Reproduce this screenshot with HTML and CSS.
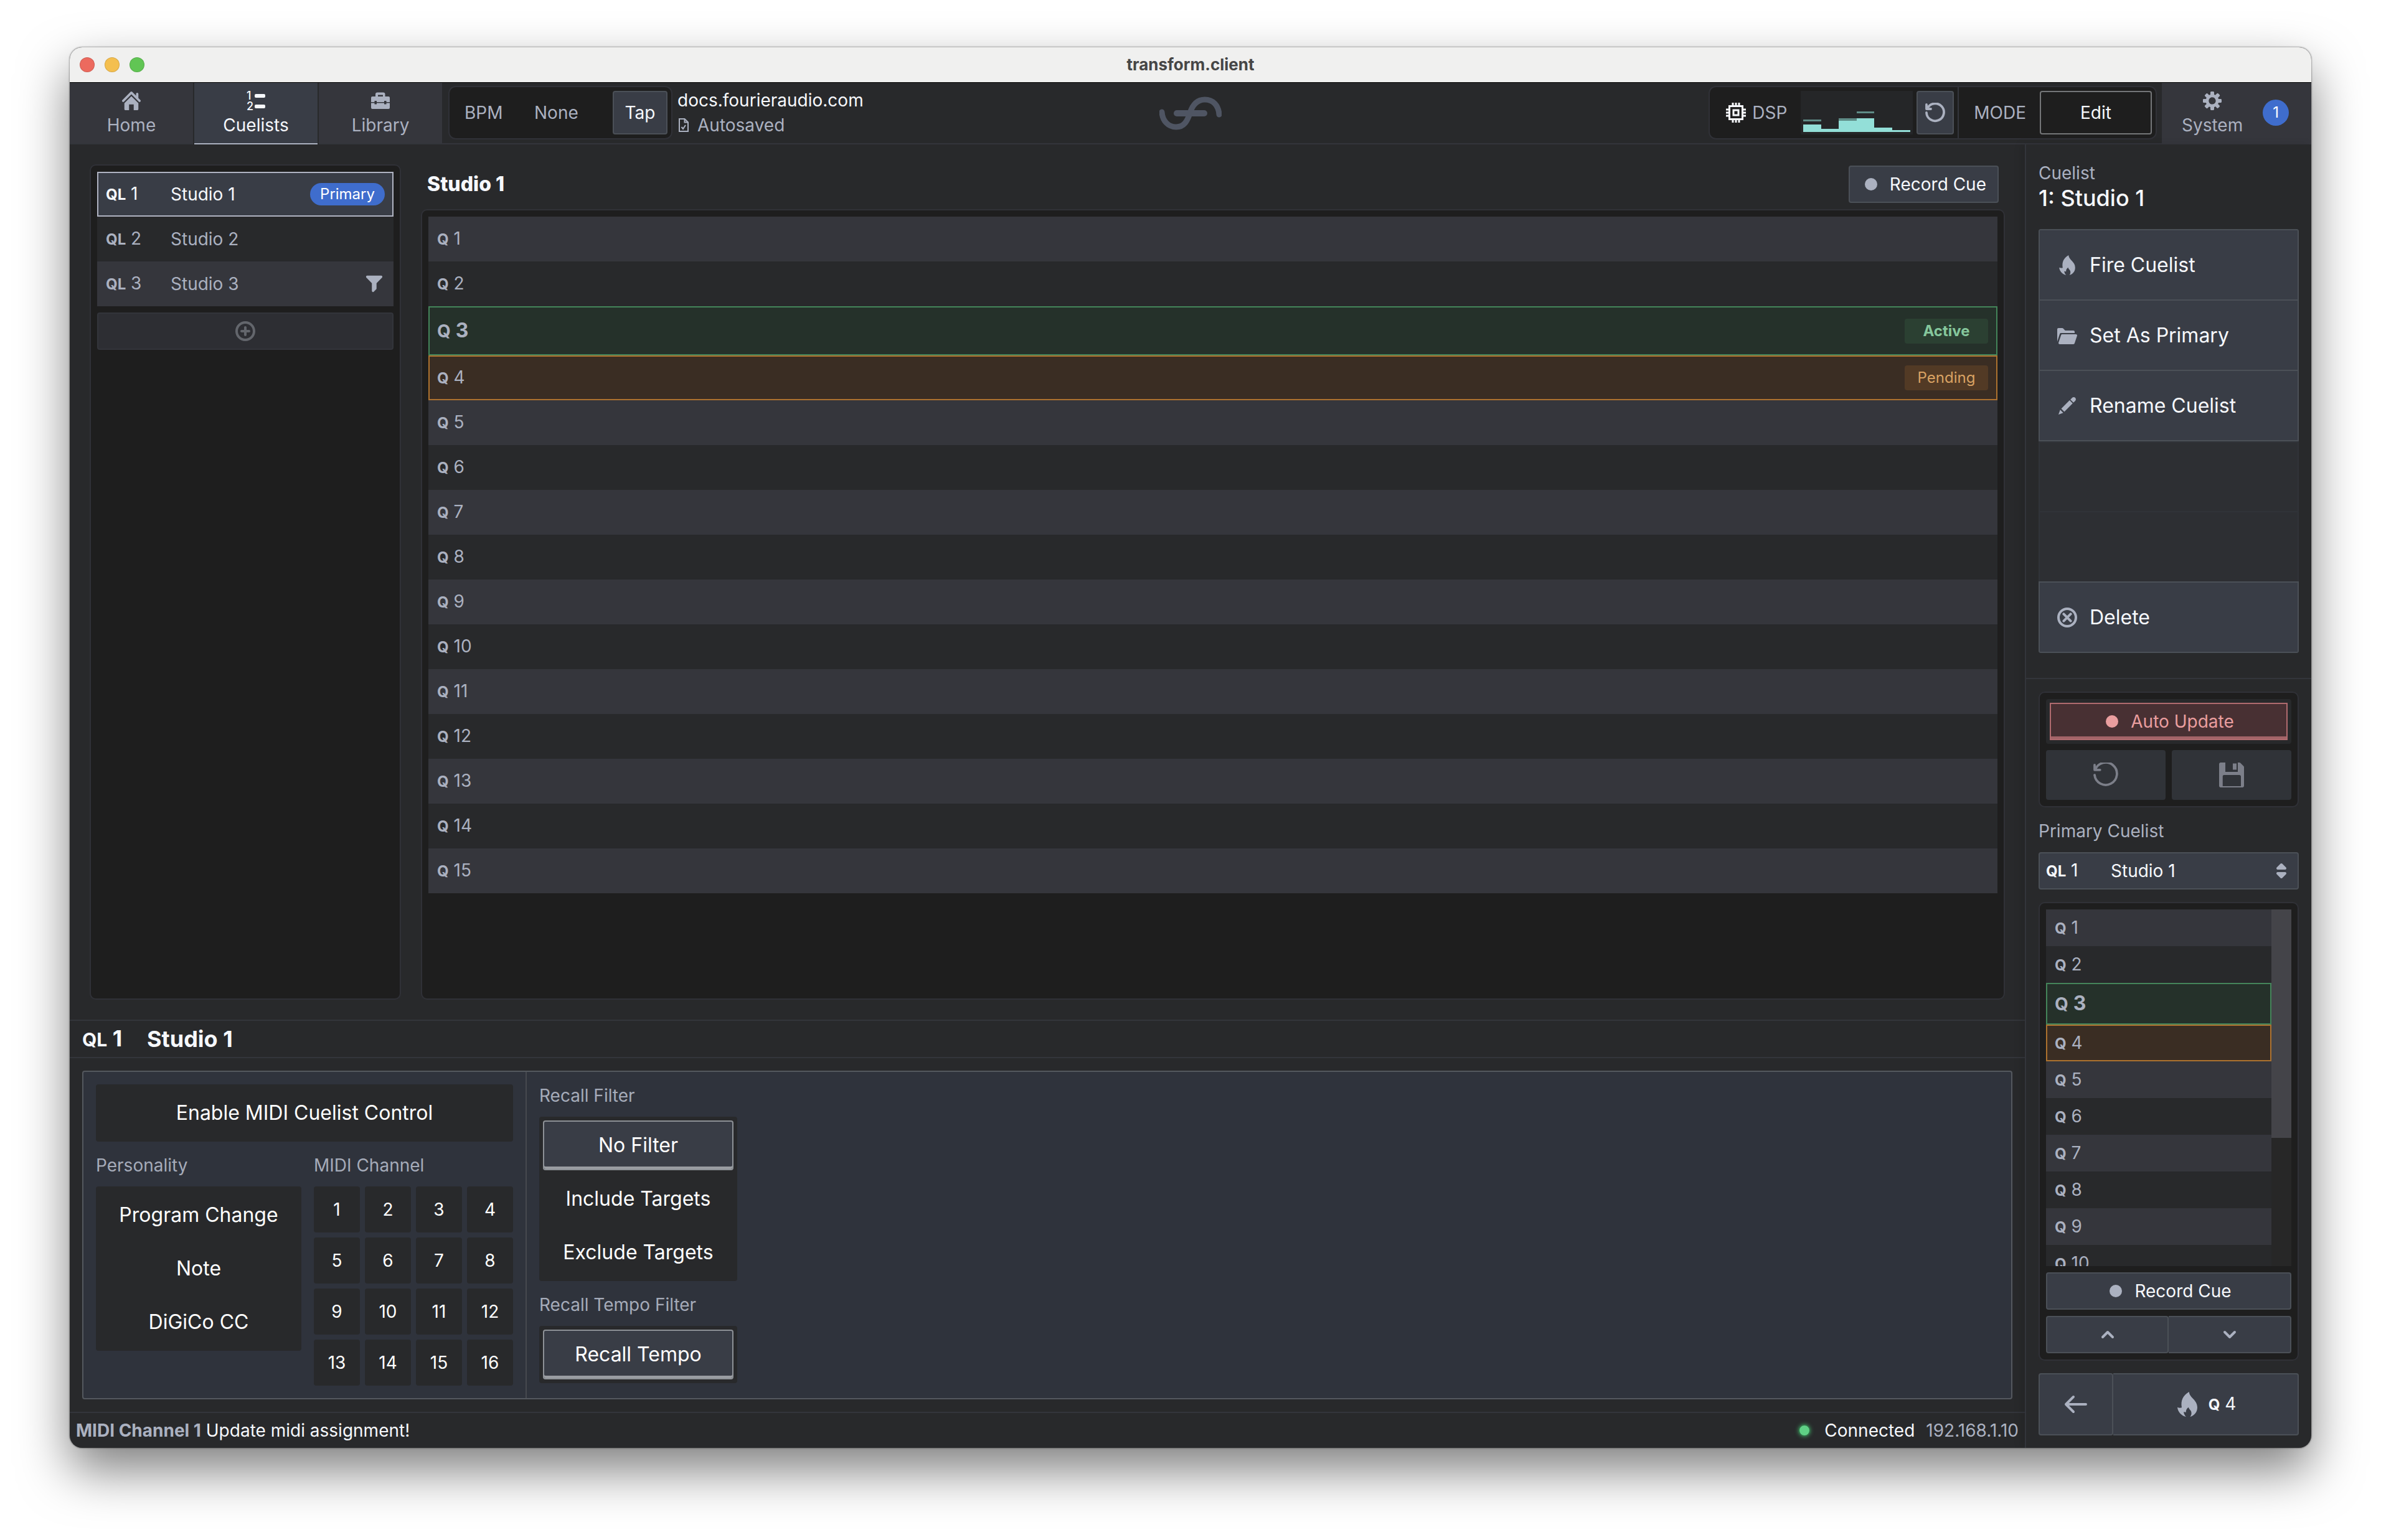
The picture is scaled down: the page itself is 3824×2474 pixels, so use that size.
FILE: index.html
```html
<!DOCTYPE html>
<html lang="en">
<head>
<meta charset="utf-8">
<meta name="viewport" content="width=device-width, initial-scale=1">
<title>transform.client</title>
<link rel="stylesheet" href="styles.css">
</head>
<body>
<svg class="sprite" aria-hidden="true">
  <symbol id="i-home" viewBox="0 0 16 16"><path d="M2 10v5c0 .55.45 1 1 1h3v-5h4v5h3c.55 0 1-.45 1-1v-5L8 4l-6 6zm13.71-2.71L14 5.59V2c0-.55-.45-1-1-1s-1 .45-1 1v1.59L8.710.29C8.53.11 8.28 0 8 0s-.53.11-.71.29l-7 7a1.003 1.003 0 001.42 1.42L8 2.41l6.290 6.290c.18.19.43.3.71.3a1.003 1.003 0 00.71-1.710z"/></symbol>
  <symbol id="i-toolbox" viewBox="0 0 30 30"><path fill-rule="evenodd" d="M7 8V4.500A3 3 0 0110 1.500h9.500a3 3 0 013 3V8H28a2 2 0 012 2v7H24.500v-2h-3.500v2H9v-2H5.500v2H0v-7a2 2 0 012-2zM11 5.500V8h8V5.500zM0 18.500h5.500v2H9v-2h12v2h3.500v-2H30V26a2 2 0 01-2 2H2a2 2 0 01-2-2z"/></symbol>
  <symbol id="i-doc" viewBox="0 0 16 22"><path fill="none" stroke="currentColor" stroke-width="2" d="M1 1h8.500l5.500 5.500V21H1zM9.500 1v5.500H15M4.500 14l2.500 3 4-6"/></symbol>
  <symbol id="i-chip" viewBox="0 0 32 32"><path fill="none" stroke="currentColor" stroke-width="3" d="M5.500 5.500h21v21h-21zM12 12h8v8h-8zM11 0v5M16 0v5M21 0v5M11 27v5M16 27v5M21 27v5M0 11h5M0 16h5M0 21h5M27 11h5M27 16h5M27 21h5"/></symbol>
  <symbol id="i-reset" viewBox="0 0 16 16"><path fill="none" stroke="currentColor" stroke-width="1.900" stroke-linecap="round" stroke-linejoin="round" d="M1 1.500V5h3.500M1.600 4.800A7 7 0 111 8"/></symbol>
  <symbol id="i-undo" viewBox="0 0 16 16"><path fill="none" stroke="currentColor" stroke-width="1.500" stroke-linecap="round" stroke-linejoin="round" d="M.8 1.500V4.700h3.500M1.200 4.700A7.200 7.200 0 11.800 8"/></symbol>
  <symbol id="i-cog" viewBox="0 0 16 16"><path d="M15.190 6.390h-1.850c-.11-.37-.27-.71-.45-1.040l1.360-1.360c.31-.31.31-.82 0-1.130l-1.130-1.130a.803.803 0 00-1.130 0l-1.360 1.360c-.33-.17-.67-.33-1.040-.44V.79c0-.44-.36-.8-.8-.8h-1.600c-.44 0-.8.36-.8.8v1.860c-.39.12-.75.28-1.100.47l-1.300-1.300c-.3-.3-.79-.3-1.090 0L1.820 2.910c-.3.3-.3.79 0 1.090l1.300 1.300c-.2.34-.36.7-.48 1.090H.79c-.44 0-.8.36-.8.8v1.600c0 .44.36.8.8.8h1.850c.11.37.27.71.45 1.040l-1.360 1.360c-.31.31-.31.82 0 1.130l1.130 1.130c.31.31.82.31 1.130 0l1.360-1.360c.33.18.67.33 1.040.44v1.860c0 .44.36.8.8.8h1.600c.44 0 .8-.36.8-.8v-1.860c.39-.12.75-.28 1.100-.47l1.300 1.300c.3.3.79.3 1.090 0l1.090-1.090c.3-.3.3-.79 0-1.090l-1.300-1.300c.19-.35.36-.71.48-1.100h1.850c.44 0 .8-.36.8-.8v-1.600a.816.816 0 00-.81-.79zm-7.200 4.600c-1.660 0-3-1.340-3-3s1.340-3 3-3 3 1.340 3 3-1.340 3-3 3z"/></symbol>
  <symbol id="i-filter" viewBox="0 0 16 16"><path d="M13.990.99h-12a1.003 1.003 0 00-.71 1.710l4.710 4.710V14a1.003 1.003 0 001.710.71l2-2c.18-.18.29-.43.29-.71V7.410L14.700 2.700a1.003 1.003 0 00-.71-1.710z"/></symbol>
  <symbol id="i-add" viewBox="0 0 16 16"><path d="M8 0C3.580 0 0 3.580 0 8s3.580 8 8 8 8-3.580 8-8-3.580-8-8-8zm0 14c-3.310 0-6-2.690-6-6s2.690-6 6-6 6 2.690 6 6-2.690 6-6 6zm3-7H9V5c0-.55-.45-1-1-1s-1 .45-1 1v2H5c-.55 0-1 .45-1 1s.45 1 1 1h2v2c0 .55.45 1 1 1s1-.45 1-1V9h2c.55 0 1-.45 1-1s-.45-1-1-1z"/></symbol>
  <symbol id="i-flame" viewBox="0 0 16 16"><path d="M9.100 0C9.400 4 14.400 5 14.400 10c0 3.200-2.100 5.300-4.600 6 .8-1 1-2 .7-3.200C10.200 11.500 8.900 11.200 8.800 9.900c-1.200.7-1.800 1.900-1.700 3.200-.5-.1-1-.2-1.500-.2.200 1.300.7 2.300 1.600 3.100C4 15.300 1.900 12.800 1.600 9.900c.9.400 1.700.5 2.800.2C3.600 5.500 5.200 2.300 9.100 0z"/></symbol>
  <symbol id="i-folder" viewBox="0 0 16 16"><path d="M2.060 6.690c.14-.4.500-.69.940-.69h11V5c0-.55-.45-1-1-1H6.410l-1.700-1.710A.997.997 0 004 2H1c-.55 0-1 .45-1 1v9.840l2.050-6.150h.01zM16 8c0-.55-.45-1-1-1H4a.99.99 0 00-.94.69l-2 6c-.04.09-.06.2-.06.310 0 .55.450 1 1 1h11c.44 0 .81-.29.940-.69l2-6c.04-.09.060-.2.060-.310z"/></symbol>
  <symbol id="i-edit" viewBox="0 0 16 16"><path d="M3.250 10.260l2.470 2.470 6.690-6.690-2.460-2.480-6.700 6.700zM.99 14.990l3.860-1.390-2.460-2.440-1.400 3.830zm12.250-14c-.48 0-.92.2-1.240.51l-1.440 1.440 2.470 2.470 1.440-1.440c.32-.32.51-.75.51-1.240.01-.95-.77-1.740-1.740-1.740z"/></symbol>
  <symbol id="i-delete" viewBox="0 0 16 16"><path fill="none" stroke="currentColor" stroke-width="2" stroke-linecap="round" d="M15 8A7 7 0 111 8a7 7 0 0114 0zM5.200 5.200l5.600 5.600M10.800 5.200l-5.600 5.600"/></symbol>
  <symbol id="i-floppy" viewBox="0 0 16 16"><path fill-rule="evenodd" d="M15.710 2.290l-2-2A.997.997 0 0013 0h-1v6H4V0H1C.45 0 0 .45 0 1v14c0 .55.450 1 1 1h14c.55 0 1-.45 1-1V3c0-.28-.11-.53-.29-.71zM14 15.200H2.300V9c0-.55.300-1 .8-1h9.900c.55 0 1 .45 1 1v6.200zM11.200.6H8.800v4h2.400z"/></symbol>
  <symbol id="i-sort" viewBox="0 0 16 16"><path d="M5 7h6a1.003 1.003 0 00.71-1.710l-3-3C8.530 2.110 8.280 2 8 2s-.53.11-.71.290l-3 3A1.003 1.003 0 005 7zm6 2H5a1.003 1.003 0 00-.71 1.710l3 3c.18.180.43.290.71.290s.53-.11.710-.29l3-3A1.003 1.003 0 0011 9z"/></symbol>
  <symbol id="i-up" viewBox="0 0 16 16"><path fill="none" stroke="currentColor" stroke-width="2" stroke-linecap="round" stroke-linejoin="round" d="M4 10l4-4 4 4"/></symbol>
  <symbol id="i-down" viewBox="0 0 16 16"><path fill="none" stroke="currentColor" stroke-width="2" stroke-linecap="round" stroke-linejoin="round" d="M4 6l4 4 4-4"/></symbol>
  <symbol id="i-left" viewBox="0 0 40 40"><path fill="none" stroke="currentColor" stroke-width="4" stroke-linecap="round" stroke-linejoin="round" d="M36 20H4M16 8L4 20l12 12"/></symbol>
</svg>

<div class="window">
  <div class="titlebar">
    <div class="lights"><span class="light red"></span><span class="light yellow"></span><span class="light green"></span></div>
    <h1 class="window-title">transform.client</h1>
  </div>

  <header class="topbar">
    <div class="top-left">
      <nav class="tabs">
        <a class="tab" href="#home"><svg class="icon-tab"><use href="#i-home"/></svg>Home</a>
        <a class="tab active" href="#cuelists"><svg class="icon-tab" viewBox="0 0 30 30"><text class="numeral" x="0" y="13">1</text><text class="numeral" x="0" y="30">2</text><rect x="13" y="4" width="17" height="6" rx="2"/><rect x="13" y="21" width="17" height="6" rx="2"/></svg>Cuelists</a>
        <a class="tab" href="#library"><svg class="icon-tab"><use href="#i-toolbox"/></svg>Library</a>
      </nav>
      <div class="group bpm">
        <span class="bpm-label">BPM</span>
        <output class="bpm-value">None</output>
        <button class="btn tap" type="button">Tap</button>
      </div>
      <div class="session">
        <div class="session-name">docs.fourieraudio.com</div>
        <div class="session-state"><svg class="icon-doc"><use href="#i-doc"/></svg>Autosaved</div>
      </div>
    </div>
    <svg class="logo" viewBox="0 0 100 54"><path d="M4 25C5 39 14 49 27 49c13 0 18-10 22-22C53 14 60 5 73 5c13 0 22 9 23 24"/><path class="logo-bar" d="M28 27h44"/></svg>
    <div class="top-right">
      <div class="group dsp">
        <svg class="icon-chip"><use href="#i-chip"/></svg>
        <span class="dsp-label">DSP</span>
        <svg class="meter" viewBox="0 0 180 70">
          <path class="bars" d="M4 66V54h29v7h28V48h29V44h28v15h29v4h29v3z"/>
          <path class="peaks" d="M4 46h29v3H4zM61 44h29v4H61zM90 33h28v3H90z"/>
        </svg>
        <button class="btn dsp-reset" type="button" aria-label="Reset DSP meter"><svg class="icon"><use href="#i-reset"/></svg></button>
        <span class="mode-label">MODE</span>
        <button class="mode-btn" type="button">Edit</button>
      </div>
      <a class="system" href="#system">
        <span class="system-tab"><svg class="icon-tab"><use href="#i-cog"/></svg>System</span>
        <span class="count">1</span>
      </a>
    </div>
  </header>

  <div class="body">
    <main class="main">
      <div class="workspace">
        <section class="panel cuelists" aria-label="Cuelists">
          <ul class="list">
            <li class="row selected"><span class="num"><b>QL</b> 1</span><span class="name">Studio 1</span><span class="pill">Primary</span></li>
            <li class="row"><span class="num"><b>QL</b> 2</span><span class="name">Studio 2</span></li>
            <li class="row"><span class="num"><b>QL</b> 3</span><span class="name">Studio 3</span><svg class="icon-tab"><use href="#i-filter"/></svg></li>
          </ul>
          <button class="add" type="button" aria-label="Add cuelist"><svg class="icon"><use href="#i-add"/></svg></button>
        </section>

        <section class="cues">
          <div class="cues-head">
            <h2 class="cues-title">Studio 1</h2>
            <button class="btn record" type="button"><span class="dot"></span>Record Cue</button>
          </div>
          <div class="panel cue-panel">
            <ol class="list">
              <li class="row"><span><b>Q</b> 1</span></li>
              <li class="row"><span><b>Q</b> 2</span></li>
              <li class="row is-active"><span><b>Q</b> <strong>3</strong></span><span class="status">Active</span></li>
              <li class="row is-pending"><span><b>Q</b> 4</span><span class="status">Pending</span></li>
              <li class="row"><span><b>Q</b> 5</span></li>
              <li class="row"><span><b>Q</b> 6</span></li>
              <li class="row"><span><b>Q</b> 7</span></li>
              <li class="row"><span><b>Q</b> 8</span></li>
              <li class="row"><span><b>Q</b> 9</span></li>
              <li class="row"><span><b>Q</b> 10</span></li>
              <li class="row"><span><b>Q</b> 11</span></li>
              <li class="row"><span><b>Q</b> 12</span></li>
              <li class="row"><span><b>Q</b> 13</span></li>
              <li class="row"><span><b>Q</b> 14</span></li>
              <li class="row"><span><b>Q</b> 15</span></li>
            </ol>
          </div>
        </section>
      </div>

      <h2 class="detail-head"><span class="num"><b>QL</b> 1</span><span>Studio 1</span></h2>

      <section class="config">
        <div class="config-midi">
          <label class="toggle solo"><input type="checkbox">Enable MIDI Cuelist Control</label>
          <div class="midi-grid">
            <fieldset class="field">
              <legend class="caption">Personality</legend>
              <div class="options">
                <label class="toggle"><input type="radio" name="personality">Program Change</label>
                <label class="toggle"><input type="radio" name="personality">Note</label>
                <label class="toggle"><input type="radio" name="personality">DiGiCo CC</label>
              </div>
            </fieldset>
            <fieldset class="field">
              <legend class="caption">MIDI Channel</legend>
              <div class="channels">
                <label class="channel"><input type="radio" name="channel">1</label>
                <label class="channel"><input type="radio" name="channel">2</label>
                <label class="channel"><input type="radio" name="channel">3</label>
                <label class="channel"><input type="radio" name="channel">4</label>
                <label class="channel"><input type="radio" name="channel">5</label>
                <label class="channel"><input type="radio" name="channel">6</label>
                <label class="channel"><input type="radio" name="channel">7</label>
                <label class="channel"><input type="radio" name="channel">8</label>
                <label class="channel"><input type="radio" name="channel">9</label>
                <label class="channel"><input type="radio" name="channel">10</label>
                <label class="channel"><input type="radio" name="channel">11</label>
                <label class="channel"><input type="radio" name="channel">12</label>
                <label class="channel"><input type="radio" name="channel">13</label>
                <label class="channel"><input type="radio" name="channel">14</label>
                <label class="channel"><input type="radio" name="channel">15</label>
                <label class="channel"><input type="radio" name="channel">16</label>
              </div>
            </fieldset>
          </div>
        </div>
        <div class="config-recall">
          <fieldset class="field">
            <legend class="caption">Recall Filter</legend>
            <div class="options">
              <label class="toggle"><input type="radio" name="recall" checked>No Filter</label>
              <label class="toggle"><input type="radio" name="recall">Include Targets</label>
              <label class="toggle"><input type="radio" name="recall">Exclude Targets</label>
            </div>
          </fieldset>
          <fieldset class="field">
            <legend class="caption">Recall Tempo Filter</legend>
            <div class="options">
              <label class="toggle"><input type="checkbox" checked>Recall Tempo</label>
            </div>
          </fieldset>
        </div>
      </section>

      <footer class="statusbar">
        <div><b class="status-key">MIDI Channel 1</b> <span class="bright">Update midi assignment!</span></div>
        <div class="connection"><span class="led"></span><span class="bright">Connected</span><span>192.168.1.10</span></div>
      </footer>
    </main>

    <aside class="sidebar">
      <section class="side-top">
        <div class="side-kind">Cuelist</div>
        <h2 class="side-title">1: Studio 1</h2>
        <div class="actions">
          <button class="action" type="button"><svg class="icon"><use href="#i-flame"/></svg>Fire Cuelist</button>
          <button class="action" type="button"><svg class="icon"><use href="#i-folder"/></svg>Set As Primary</button>
          <button class="action" type="button"><svg class="icon"><use href="#i-edit"/></svg>Rename Cuelist</button>
          <div class="slot"></div>
          <div class="slot"></div>
          <button class="action" type="button"><svg class="icon"><use href="#i-delete"/></svg>Delete</button>
        </div>
      </section>
      <section class="side-bottom">
        <div class="panel update">
          <label class="auto"><input type="checkbox" checked><span class="dot"></span>Auto Update</label>
          <button class="tool" type="button" aria-label="Revert" disabled><svg class="icon-lg"><use href="#i-undo"/></svg></button>
          <button class="tool" type="button" aria-label="Save" disabled><svg class="icon-lg"><use href="#i-floppy"/></svg></button>
        </div>
        <label class="caption side-caption" for="primary">Primary Cuelist</label>
        <div class="btn picker">
          <span class="num"><b>QL</b> 1</span>
          <select id="primary" class="picker-select"><option>Studio 1</option><option>Studio 2</option><option>Studio 3</option></select>
          <svg class="icon"><use href="#i-sort"/></svg>
        </div>
        <div class="panel mini">
          <div class="mini-view">
            <ol class="list compact">
              <li class="row"><span><b>Q</b> 1</span></li>
              <li class="row"><span><b>Q</b> 2</span></li>
              <li class="row is-active"><span><b>Q</b> <strong>3</strong></span></li>
              <li class="row is-pending"><span><b>Q</b> 4</span></li>
              <li class="row"><span><b>Q</b> 5</span></li>
              <li class="row"><span><b>Q</b> 6</span></li>
              <li class="row"><span><b>Q</b> 7</span></li>
              <li class="row"><span><b>Q</b> 8</span></li>
              <li class="row"><span><b>Q</b> 9</span></li>
              <li class="row"><span><b>Q</b> 10</span></li>
            </ol>
            <div class="track"><div class="thumb"></div></div>
          </div>
          <button class="btn record" type="button"><span class="dot"></span>Record Cue</button>
          <div class="split">
            <button class="btn" type="button" aria-label="Previous cue"><svg class="icon"><use href="#i-up"/></svg></button>
            <button class="btn" type="button" aria-label="Next cue"><svg class="icon"><use href="#i-down"/></svg></button>
          </div>
        </div>
        <div class="split fire">
          <button class="btn" type="button" aria-label="Back"><svg class="icon-lg"><use href="#i-left"/></svg></button>
          <button class="btn fire-next" type="button"><svg class="icon-lg"><use href="#i-flame"/></svg><span><b>Q</b> 4</span></button>
        </div>
      </section>
    </aside>
  </div>
</div>
</body>
</html>
```
FILE: styles.css
```css
:root {
  --bg: #28292b;
  --well: #1e1e1e;
  --line: #33353b;
  --raised: #35363c;
  --control: #393d46;
  --edge: #4b5057;
  --muted: #abb1c0;
  --bright: #f6f8fc;
  --blue: #3f6dcd;
}

* { box-sizing: border-box; }

body {
  margin: 0;
  min-height: 100vh;
  padding: 76px 112px 148px;
  display: flex;
  background: #fff;
  color: var(--muted);
  font: 400 28px/36px Inter, "Liberation Sans", sans-serif;
}

h1, h2, ol, ul, fieldset, legend { margin: 0; padding: 0; border: 0; list-style: none; }
button, select { font: inherit; color: inherit; margin: 0; cursor: pointer; }
a { color: inherit; text-decoration: none; }
svg { display: block; fill: currentColor; flex: none; }
b { font-size: 24px; font-weight: 700; }
input { position: absolute; appearance: none; margin: 0; opacity: 0; }

.sprite { position: absolute; width: 0; height: 0; }
.icon { width: 32px; height: 32px; }
.icon-tab { width: 30px; height: 30px; overflow: visible; }
.icon-lg { width: 40px; height: 40px; }
.bright { color: var(--bright); }

/* Window frame */
.window {
  flex: 1;
  min-width: 0;
  display: flex;
  flex-direction: column;
  border-radius: 20px;
  overflow: hidden;
  background: var(--bg);
  box-shadow: 0 0 2px 1px rgba(0, 0, 0, .3), 0 36px 80px rgba(0, 0, 0, .5);
}
.titlebar {
  display: grid;
  grid-template-columns: 1fr auto 1fr;
  align-items: center;
  height: 56px;
  padding: 0 16px;
  background: #f0f0ef;
}
.lights { display: flex; gap: 16px; }
.light { width: 24px; height: 24px; border-radius: 50%; border: 1px solid rgba(0, 0, 0, .12); }
.red { background: #ec6a5e; }
.yellow { background: #f4bf4f; }
.green { background: #61c554; }
.window-title { font-size: 26px; font-weight: 700; color: #464646; }

/* Top bar */
.topbar {
  display: grid;
  grid-template-columns: 1fr auto 1fr;
  height: 100px;
  border-top: 1px solid #000;
  box-shadow: inset 0 -2px var(--line);
}
.top-left, .top-right { display: flex; align-items: flex-start; }
.top-right { justify-content: flex-end; }
.tabs { display: flex; align-self: stretch; gap: 2px; background: var(--bg); }
.tab, .system-tab {
  display: flex;
  flex-direction: column;
  align-items: center;
  gap: 6px;
  padding-top: 14px;
}
.tab { width: 198px; background: var(--raised); border-bottom: 2px solid var(--line); }
.tab.active { background: var(--control); color: var(--bright); border-color: var(--muted); }
.numeral { font-size: 18px; font-weight: 500; }
.group {
  display: flex;
  align-items: center;
  height: 86px;
  margin: 5px 8px 0 10px;
  padding: 6px;
  border: 2px solid #303137;
  border-radius: 12px;
  background: var(--well);
}
.bpm { width: 360px; padding-left: 24px; }
.bpm-label { width: 112px; }
.bpm-value { flex: 1; }
.btn {
  display: flex;
  align-items: center;
  justify-content: center;
  padding: 0;
  border: 2px solid var(--edge);
  border-radius: 4px;
  background: var(--control);
  color: var(--muted);
}
.tap { width: 88px; height: 70px; color: var(--bright); }
.session { line-height: 40px; padding-top: 8px; }
.session-name { color: var(--bright); }
.session-state { display: flex; align-items: center; gap: 14px; padding-left: 2px; }
.icon-doc { width: 16px; height: 24px; }
.logo { width: 100px; height: 54px; margin-top: 22px; fill: none; stroke: #4f5563; stroke-width: 9; stroke-linecap: round; }
.logo-bar { stroke-width: 10; }
.dsp { padding-left: 26px; }
.icon-chip { width: 32px; height: 32px; color: var(--bright); margin-right: 10px; }
.dsp-label { width: 78px; }
.meter { width: 180px; height: 70px; margin-right: 6px; background: #252628; }
.bars { fill: #93dfd8; }
.peaks { fill: #5f8c87; }
.dsp-reset { width: 60px; height: 70px; }
.mode-label {
  display: flex;
  align-items: center;
  height: 82px;
  margin-left: 6px;
  padding: 0 22px 0 24px;
  border-left: 2px solid var(--line);
}
.mode-btn {
  width: 180px;
  height: 70px;
  border: 2px solid #747678;
  border-radius: 4px;
  background: var(--well);
  color: var(--bright);
}
.system {
  display: flex;
  align-self: stretch;
  align-items: flex-start;
  gap: 32px;
  width: 240px;
  padding-left: 32px;
  background: var(--raised);
}
.count {
  width: 42px;
  height: 42px;
  margin-top: 27px;
  border-radius: 50%;
  background: var(--blue);
  color: #fff;
  font-size: 24px;
  line-height: 42px;
  text-align: center;
}

/* Body */
.body { flex: 1; display: flex; min-height: 0; }
.main { flex: 1; min-width: 0; display: flex; flex-direction: column; }
.workspace { flex: 1; display: flex; gap: 32px; padding: 32px; min-height: 0; }
.panel { padding: 10px; border: 2px solid #303137; border-radius: 10px; background: var(--well); }
.cuelists { width: 500px; }
.row {
  display: flex;
  align-items: center;
  justify-content: space-between;
  height: 72px;
  padding: 0 16px 0 14px;
  background: var(--raised);
}
.row:nth-child(even) { background: var(--bg); }
.num { width: 104px; }
.name { flex: 1; }
.row.selected { padding: 0 12px; border: 2px solid #b0b4c2; background: var(--control); color: var(--bright); }
.pill {
  padding: 0 16px;
  border-radius: 18px;
  background: var(--blue);
  color: #fff;
  font-size: 24px;
}
.add {
  display: flex;
  align-items: center;
  justify-content: center;
  width: 100%;
  height: 60px;
  margin-top: 10px;
  border: 2px solid var(--line);
  border-radius: 4px;
  background: #2d2e33;
  color: #63666c;
}
.cues { flex: 1; min-width: 0; display: flex; flex-direction: column; gap: 10px; }
.cues-head { display: flex; align-items: center; justify-content: space-between; padding: 2px 10px 0; }
.cues-title { font-size: 32px; font-weight: 800; color: var(--bright); }
.record { height: 60px; gap: 20px; padding: 0 18px 0 24px; color: var(--bright); }
.dot { width: 20px; height: 20px; border-radius: 50%; background: var(--muted); }
.auto .dot { background: currentColor; }
.cue-panel { flex: 1; }
.row.is-active, .row.is-pending { padding: 0 13px 0 12px; border: 2px solid; }
.row.is-active { height: 79px; border-color: #44855a; background: #25312a; }
.row.is-pending { border-color: #ad722f; background: #3a2d23; }
.is-active b { font-size: 28px; }
strong { font-size: 32px; font-weight: 700; }
.status {
  width: 134px;
  border-radius: 4px;
  font-size: 24px;
  line-height: 40px;
  text-align: center;
}
.is-active .status { background: #2b4032; color: #85c79c; font-weight: 700; }
.is-pending .status { background: #523a25; color: #d9a263; }

.detail-head {
  display: flex;
  align-items: center;
  height: 62px;
  padding: 0 20px;
  border: solid var(--line);
  border-width: 2px 0;
  color: var(--bright);
  font-size: 36px;
  font-weight: 700;
}
.detail-head b { font-size: 30px; }

/* Cuelist settings */
.config {
  display: flex;
  margin: 20px;
  border: 2px solid #54585e;
  border-radius: 4px;
  background: #2f333c;
}
.config-midi, .config-recall { display: flex; flex-direction: column; gap: 20px; padding: 20px; }
.config-midi { width: 712px; border-right: 2px solid #46494f; }
.config-recall { width: 358px; }
.midi-grid { display: grid; grid-template-columns: 330px 1fr; gap: 20px; }
.field { min-width: 0; }
.caption { display: block; margin-bottom: 16px; color: #a5abb9; }
.options { padding: 3px; border-radius: 4px; background: var(--bg); }
.toggle {
  display: flex;
  align-items: center;
  justify-content: center;
  height: 80px;
  margin: 3px;
  border: 2px solid transparent;
  border-radius: 4px;
  color: #fff;
  font-size: 32px;
}
.toggle + .toggle { margin-top: 6px; }
.toggle:has(:checked) {
  border-color: #8d9196;
  background: var(--control);
  box-shadow: inset 0 -4px #9a9da2;
}
.toggle.solo { height: 92px; margin: 0; background: var(--bg); }
.channels { display: grid; grid-template-columns: repeat(4, 1fr); gap: 8px; }
.channel { height: 74px; border-radius: 4px; background: var(--bg); color: #fff; line-height: 74px; text-align: center; }

.statusbar {
  display: flex;
  align-items: center;
  justify-content: space-between;
  height: 58px;
  padding: 0 10px;
  border-top: 2px solid var(--line);
}
.status-key { font-size: 28px; }
.connection { display: flex; align-items: center; gap: 18px; }
.led { width: 20px; height: 20px; margin-right: 4px; border-radius: 50%; background: #5fd085; border: 2px solid #2f6b45; box-shadow: 0 0 6px #3f8f5c; }

/* Sidebar */
.sidebar {
  width: 460px;
  display: flex;
  flex-direction: column;
  border-left: 2px solid var(--line);
  box-shadow: -6px 0 12px rgba(0, 0, 0, .1);
}
.side-top { padding: 28px 20px 40px; border-bottom: 2px solid var(--line); }
.side-title { margin-bottom: 28px; color: var(--bright); font-size: 36px; font-weight: 500; line-height: 44px; }
.actions { display: flex; flex-direction: column; border-radius: 4px; overflow: hidden; }
.action, .slot { height: 115px; border: 2px solid var(--edge); }
.action + .action, .slot + .action, .slot + .slot { margin-top: -2px; }
.action {
  display: flex;
  align-items: center;
  gap: 20px;
  padding: 0 28px;
  background: var(--control);
  color: var(--bright);
  font-size: 32px;
}
.action .icon { color: var(--muted); }
.slot { border-color: #303338; background: #2d2f33; }
.action + .slot { height: 114px; }
.side-bottom { flex: 1; display: flex; flex-direction: column; padding: 20px; min-height: 0; }
.update { display: grid; grid-template-columns: 1fr 1fr; gap: 10px; }
.auto {
  grid-column: 1 / 3;
  display: flex;
  align-items: center;
  justify-content: center;
  gap: 20px;
  height: 72px;
  padding-left: 4px;
  border: 6px solid var(--bg);
  border-radius: 4px;
  background: #483033;
  box-shadow: inset 0 0 0 2px #b06b6f, inset 0 -6px #a36468;
  color: #ea9e9f;
}
.tool {
  display: flex;
  align-items: center;
  justify-content: center;
  height: 80px;
  border: 0;
  border-radius: 4px;
  background: #303338;
  color: #7c7f89;
}
.side-caption { margin-top: 20px; color: var(--muted); }
.picker { height: 60px; justify-content: flex-start; margin-bottom: 20px; padding: 0 10px; color: var(--bright); }
.picker .icon { color: var(--muted); }
.picker-select { flex: 1; min-width: 0; border: 0; padding: 0; appearance: none; background: none; }
.mini { flex: 1; display: flex; flex-direction: column; gap: 10px; min-height: 0; }
.mini-view { flex: 1 1 0; display: flex; min-height: 0; overflow: hidden; }
.compact { flex: 1; }
.compact .row { height: 59px; }
.compact .row.is-active { height: 67px; }
.track { width: 32px; background: #272727; }
.thumb { height: 64%; background: #444449; }
.split { display: grid; grid-template-columns: 1fr 1fr; height: 60px; }
.split .btn + .btn { border-left: 0; border-radius: 0 4px 4px 0; }
.fire { grid-template-columns: 120px 1fr; height: 100px; margin-top: 20px; }
.fire-next { gap: 14px; }
.fire-next span { color: var(--bright); }
```
